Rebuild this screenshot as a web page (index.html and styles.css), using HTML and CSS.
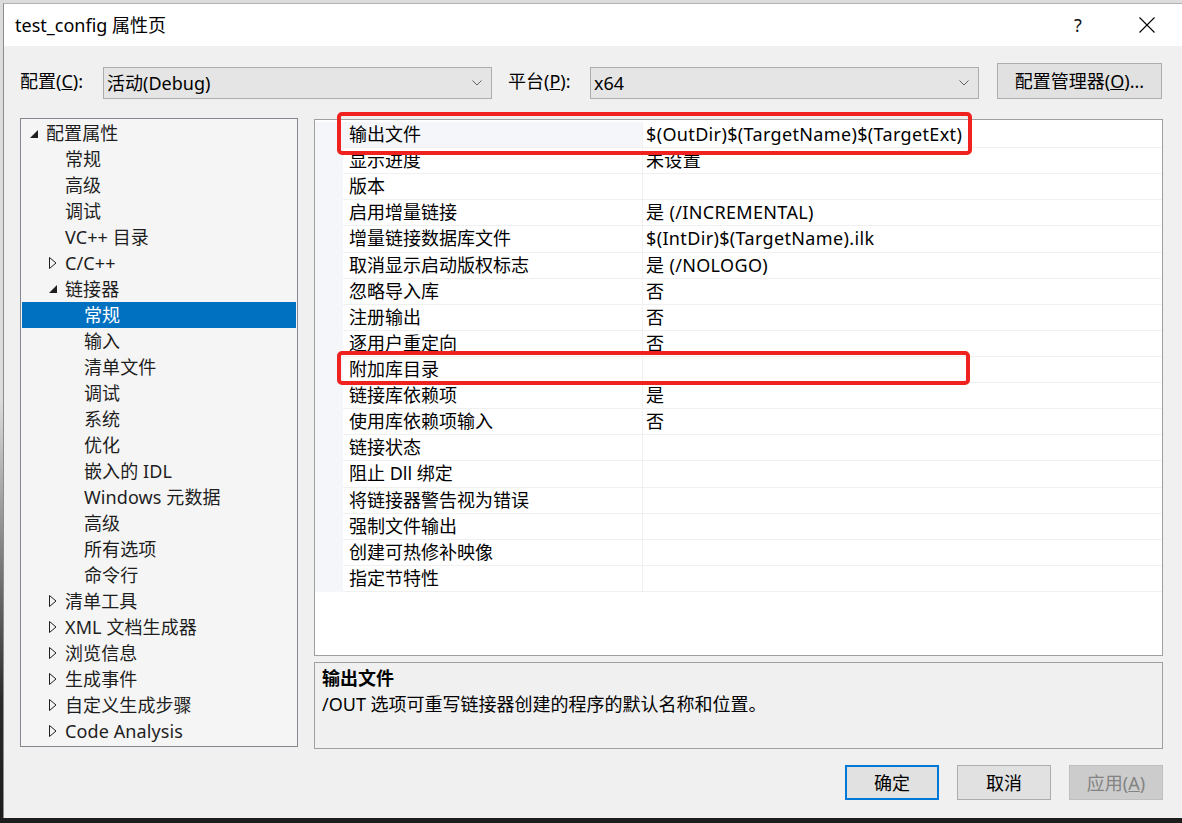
FILE: index.html
```html
<!DOCTYPE html>
<html lang="zh-CN">
<head>
<meta charset="utf-8">
<title>test_config 属性页</title>
<link rel="stylesheet" href="styles.css">
</head>
<body>
<div class="window">
  <div class="titlebar">
    <span class="title">test_config 属性页</span>
    <span class="tb-help">?</span>
    <span class="tb-close"><svg width="16" height="16" viewBox="0 0 16 16"><path d="M0.5 0.5L15.5 15.5M15.5 0.5L0.5 15.5" stroke="#000" stroke-width="1.1" fill="none"/></svg></span>
  </div>
  <div class="body">
    <div class="config-row">
      <span class="cfg-label">配置(<u>C</u>):</span>
      <div class="combo"><span class="combo-text">活动(Debug)</span><svg class="chev" width="10" height="6" viewBox="0 0 10 6"><path d="M0.5 0.5L5 5L9.5 0.5" stroke="#606060" stroke-width="1" fill="none"/></svg></div>
      <span class="cfg-label plat">平台(<u>P</u>):</span>
      <div class="combo"><span class="combo-text">x64</span><svg class="chev" width="10" height="6" viewBox="0 0 10 6"><path d="M0.5 0.5L5 5L9.5 0.5" stroke="#606060" stroke-width="1" fill="none"/></svg></div>
      <button class="btn mgr">配置管理器(<u>O</u>)...</button>
    </div>

    <div class="main">
      <div class="tree">
        <div class="node l0"><span class="tog"><svg width="9" height="8" viewBox="0 0 9 8"><polygon points="8,0 8,8 0,8" fill="#1e1e1e"/></svg></span><span>配置属性</span></div>
        <div class="node l1"><span class="tog"></span><span>常规</span></div>
        <div class="node l1"><span class="tog"></span><span>高级</span></div>
        <div class="node l1"><span class="tog"></span><span>调试</span></div>
        <div class="node l1"><span class="tog"></span><span>VC++ 目录</span></div>
        <div class="node l1"><span class="tog"><svg width="8" height="12" viewBox="0 0 8 12"><polygon points="0.5,0.5 7,6 0.5,11.5" fill="none" stroke="#1e1e1e" stroke-width="1"/></svg></span><span>C/C++</span></div>
        <div class="node l1"><span class="tog"><svg width="9" height="8" viewBox="0 0 9 8"><polygon points="8,0 8,8 0,8" fill="#1e1e1e"/></svg></span><span>链接器</span></div>
        <div class="node l2 selected"><span class="tog"></span><span>常规</span></div>
        <div class="node l2"><span class="tog"></span><span>输入</span></div>
        <div class="node l2"><span class="tog"></span><span>清单文件</span></div>
        <div class="node l2"><span class="tog"></span><span>调试</span></div>
        <div class="node l2"><span class="tog"></span><span>系统</span></div>
        <div class="node l2"><span class="tog"></span><span>优化</span></div>
        <div class="node l2"><span class="tog"></span><span>嵌入的 IDL</span></div>
        <div class="node l2"><span class="tog"></span><span>Windows 元数据</span></div>
        <div class="node l2"><span class="tog"></span><span>高级</span></div>
        <div class="node l2"><span class="tog"></span><span>所有选项</span></div>
        <div class="node l2"><span class="tog"></span><span>命令行</span></div>
        <div class="node l1"><span class="tog"><svg width="8" height="12" viewBox="0 0 8 12"><polygon points="0.5,0.5 7,6 0.5,11.5" fill="none" stroke="#1e1e1e" stroke-width="1"/></svg></span><span>清单工具</span></div>
        <div class="node l1"><span class="tog"><svg width="8" height="12" viewBox="0 0 8 12"><polygon points="0.5,0.5 7,6 0.5,11.5" fill="none" stroke="#1e1e1e" stroke-width="1"/></svg></span><span>XML 文档生成器</span></div>
        <div class="node l1"><span class="tog"><svg width="8" height="12" viewBox="0 0 8 12"><polygon points="0.5,0.5 7,6 0.5,11.5" fill="none" stroke="#1e1e1e" stroke-width="1"/></svg></span><span>浏览信息</span></div>
        <div class="node l1"><span class="tog"><svg width="8" height="12" viewBox="0 0 8 12"><polygon points="0.5,0.5 7,6 0.5,11.5" fill="none" stroke="#1e1e1e" stroke-width="1"/></svg></span><span>生成事件</span></div>
        <div class="node l1"><span class="tog"><svg width="8" height="12" viewBox="0 0 8 12"><polygon points="0.5,0.5 7,6 0.5,11.5" fill="none" stroke="#1e1e1e" stroke-width="1"/></svg></span><span>自定义生成步骤</span></div>
        <div class="node l1"><span class="tog"><svg width="8" height="12" viewBox="0 0 8 12"><polygon points="0.5,0.5 7,6 0.5,11.5" fill="none" stroke="#1e1e1e" stroke-width="1"/></svg></span><span>Code Analysis</span></div>
      </div>

      <div class="right">
        <div class="grid">
          <div class="rows">
            <div class="row current"><div class="name">输出文件</div><div class="value">$(OutDir)$(TargetName)$(TargetExt)</div></div>
            <div class="row"><div class="name">显示进度</div><div class="value">未设置</div></div>
            <div class="row"><div class="name">版本</div><div class="value"></div></div>
            <div class="row"><div class="name">启用增量链接</div><div class="value">是 (/INCREMENTAL)</div></div>
            <div class="row"><div class="name">增量链接数据库文件</div><div class="value">$(IntDir)$(TargetName).ilk</div></div>
            <div class="row"><div class="name">取消显示启动版权标志</div><div class="value">是 (/NOLOGO)</div></div>
            <div class="row"><div class="name">忽略导入库</div><div class="value">否</div></div>
            <div class="row"><div class="name">注册输出</div><div class="value">否</div></div>
            <div class="row"><div class="name">逐用户重定向</div><div class="value">否</div></div>
            <div class="row"><div class="name">附加库目录</div><div class="value"></div></div>
            <div class="row"><div class="name">链接库依赖项</div><div class="value">是</div></div>
            <div class="row"><div class="name">使用库依赖项输入</div><div class="value">否</div></div>
            <div class="row"><div class="name">链接状态</div><div class="value"></div></div>
            <div class="row"><div class="name">阻止 Dll 绑定</div><div class="value"></div></div>
            <div class="row"><div class="name">将链接器警告视为错误</div><div class="value"></div></div>
            <div class="row"><div class="name">强制文件输出</div><div class="value"></div></div>
            <div class="row"><div class="name">创建可热修补映像</div><div class="value"></div></div>
            <div class="row"><div class="name">指定节特性</div><div class="value"></div></div>
          </div>
          <div class="mark mark-1"></div>
          <div class="mark mark-2"></div>
        </div>
        <div class="desc">
          <div class="desc-title">输出文件</div>
          <div class="desc-text">/OUT 选项可重写链接器创建的程序的默认名称和位置。</div>
        </div>
      </div>
    </div>

    <div class="actions">
      <button class="btn act default">确定</button>
      <button class="btn act">取消</button>
      <button class="btn act disabled">应用(<u>A</u>)</button>
    </div>
  </div>
</div>
</body>
</html>
```

FILE: styles.css
```css
* { box-sizing: border-box; }

html, body {
  margin: 0;
  padding: 0;
}

body {
  width: 1182px;
  height: 823px;
  overflow: hidden;
  background: linear-gradient(to bottom, #dcdcdc 0, #dcdcdc 400px, #2a2a2a 700px, #1c1c1c 100%);
  font-family: "Noto Sans", "Noto Sans CJK SC", sans-serif;
  font-size: 18px;
  color: #000;
}

.window {
  margin: 3px 0 0 3px;
  width: 1179px;
  height: 815px;
  border-left: 1px solid #8c8c8c;
  border-top: 1px solid #b4b4b4;
  background: #f0f0f0;
  display: flex;
  flex-direction: column;
}

.titlebar {
  height: 42px;
  background: #fff;
  display: flex;
  align-items: center;
  padding-left: 11px;
}

.title {
  flex: 1;
  font-size: 18px;
  line-height: 24px;
}

.tb-help {
  width: 20px;
  text-align: center;
  font-size: 18px;
  margin-right: 51px;
  color: #111;
}

.tb-close {
  width: 16px;
  height: 16px;
  margin-right: 27px;
  display: flex;
}

.body {
  flex: 1;
  padding: 17px 19px 0 16px;
  display: flex;
  flex-direction: column;
}

.config-row {
  height: 36px;
  display: flex;
  align-items: center;
}

.cfg-label {
  width: 83px;
  line-height: 26px;
  white-space: nowrap;
}

.cfg-label.plat {
  width: 82px;
  margin-left: 16px;
}

.combo {
  width: 389px;
  height: 32px;
  margin-top: 3px;
  background: #e5e5e5;
  border: 1px solid #adadad;
  display: flex;
  align-items: center;
  padding: 0 9px 0 3px;
}

.combo-text {
  flex: 1;
  line-height: 26px;
}

.chev { display: block; }

.btn {
  font: inherit;
  color: #000;
  background: #e1e1e1;
  border: 1px solid #adadad;
  padding: 0;
  margin: 0;
  line-height: 26px;
  text-align: center;
}

.mgr {
  width: 165px;
  height: 36px;
  margin-left: 18px;
}

.main {
  margin-top: 19px;
  height: 631px;
  display: flex;
  gap: 16px;
}

.tree {
  width: 278px;
  height: 629px;
  background: #f5f5f5;
  border: 1px solid #828790;
  padding: 1px 0 0 0;
  color: #1e1e1e;
}

.node {
  height: 26px;
  line-height: 26px;
  display: flex;
  align-items: center;
  white-space: nowrap;
  margin: 0 1px 0 0;
  letter-spacing: 0.1px;
}

.node.l0 { padding-left: 9px; }
.node.l1 { padding-left: 28px; }
.node.l2 { padding-left: 47px; }

.tog {
  width: 16px;
  height: 26px;
  display: flex;
  align-items: center;
  flex: none;
}

.node.l0 .tog svg { margin-top: 1px; }

.node.selected {
  background: #0070c1;
  color: #fff;
  margin-left: 1px;
  padding-left: 46px;
}

.right {
  width: 849px;
  padding-top: 1px;
  display: flex;
  flex-direction: column;
  gap: 6px;
}

.grid {
  position: relative;
  height: 537px;
  background: #fff;
  border: 1px solid #a0a0a0;
  padding-top: 2px;
}

.rows {
  padding-left: 28px;
  background: linear-gradient(to right, #f4f6f9 0, #f4f6f9 28px, transparent 28px);
}

.row {
  height: 26.12px;
  display: flex;
  line-height: 25px;
  border-bottom: 1px solid #f0f0f0;
  background: #fff;
  white-space: nowrap;
}

.row .name {
  width: 300px;
  padding-left: 6px;
  border-right: 1px solid #f0f0f0;
}

.row .value {
  flex: 1;
  padding-left: 3px;
  letter-spacing: 0.35px;
}

.row.current .name {
  background: #f4f6f9;
}

.mark {
  position: absolute;
  border: 4px solid #f0221f;
  border-radius: 5px;
}

.mark-1 {
  left: 22px;
  top: -8px;
  width: 635px;
  height: 43px;
}

.mark-2 {
  left: 22px;
  top: 231px;
  width: 633px;
  height: 34px;
}

.desc {
  height: 87px;
  border: 1px solid #a0a0a0;
  background: #f0f0f0;
  padding: 2px 7px 0 7px;
}

.desc-title {
  font-weight: bold;
  line-height: 26px;
}

.desc-text {
  line-height: 26px;
}

.actions {
  margin-top: 16px;
  display: flex;
  justify-content: flex-end;
  gap: 18px;
}

.act {
  width: 94px;
  height: 35px;
}

.act.default {
  border: 2px solid #0078d7;
}

.act.disabled {
  background: #cccccc;
  border-color: #bfbfbf;
  color: #838383;
}
```
